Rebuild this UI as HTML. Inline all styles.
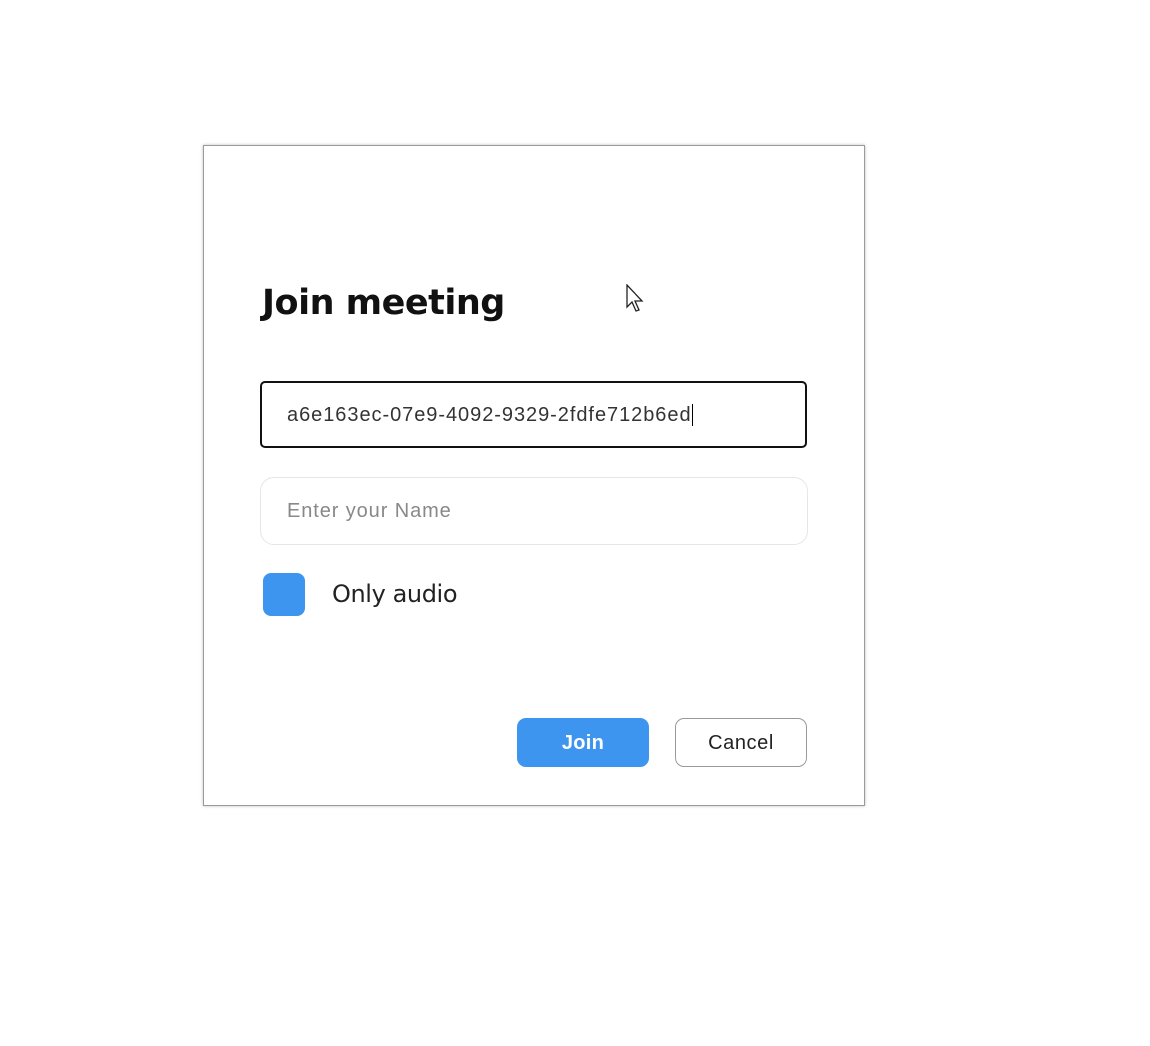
<!DOCTYPE html>
<html><head><style>
body{margin:0;width:1150px;height:1046px;background:#fff;position:relative;font-family:"Liberation Sans",sans-serif;overflow:hidden}
.dlg{position:absolute;left:203px;top:145px;width:660px;height:659px;border:1px solid #9a9a9a;box-shadow:0 0 3px rgba(0,0,0,.25);background:#fff}
.t{position:absolute;left:262px;top:283px;font:bold 35px "DejaVu Sans","Liberation Sans",sans-serif;letter-spacing:-0.5px;color:#111}
.i1{position:absolute;left:260px;top:381px;width:543px;height:63px;border:2.5px solid #111;border-radius:5px;box-sizing:content-box}
.i1 span{position:absolute;left:25px;top:21px;font-size:20px;color:#333;letter-spacing:0.95px}
.i2{position:absolute;left:260px;top:477px;width:546px;height:66px;border:1px solid #e6e6e6;border-radius:14px}
.i2 span{position:absolute;left:26px;top:22px;font-size:20px;color:#888;letter-spacing:0.9px}
.cb{position:absolute;left:263px;top:573px;width:42px;height:43px;background:#3d95ef;border-radius:8px}
.lab{position:absolute;left:332px;top:580px;font:24px "DejaVu Sans","Liberation Sans",sans-serif;color:#222;letter-spacing:-0.4px}
.b{position:absolute;top:718px;width:132px;height:49px;border-radius:9px;box-sizing:border-box;text-align:center;line-height:50px;font-size:20px}
.j{left:517px;background:#3d95ef;color:#fff;font-weight:bold;letter-spacing:0.3px}
.c{left:675px;border:1px solid #999;color:#222;line-height:49px;letter-spacing:0.6px}
</style></head><body>
<div class="dlg"></div>
<div class="t">Join meeting</div>
<div class="i1"><span>a6e163ec-07e9-4092-9329-2fdfe712b6ed<span style="position:static;border-left:1px solid #000;margin-left:0"></span></span></div>
<div class="i2"><span>Enter your Name</span></div>
<div class="cb"></div>
<div class="lab">Only audio</div>
<div class="b j">Join</div>
<div class="b c">Cancel</div>
<svg style="position:absolute;left:626px;top:284px" width="20" height="30" viewBox="0 0 20 30"><path d="M1 1 L1 23 L6 18 L10 27 L13 26 L9 17 L16 17 Z" fill="#fff" stroke="#222" stroke-width="1.3"/></svg>
</body></html>
